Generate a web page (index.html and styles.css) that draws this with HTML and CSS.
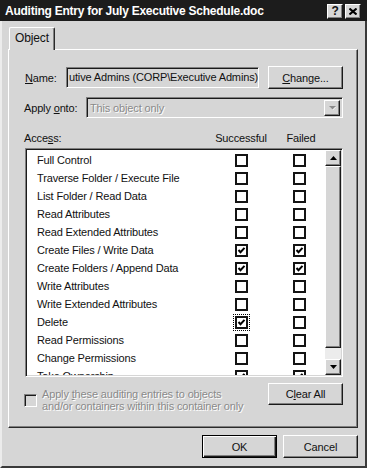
FILE: index.html
```html
<!DOCTYPE html>
<html>
<head>
    <title>Auditing Entry for July Executive Schedule.doc</title>
    <link rel="stylesheet" href="styles.css">
</head>
<body>
<div class="window">
    <!-- Title bar -->
    <div class="titlebar">
        <span class="title">Auditing Entry for July Executive Schedule.doc</span>
        <div class="caption-buttons">
            <span class="caption-btn help">?</span>
            <span class="caption-btn close">
                <svg width="8" height="7" viewBox="0 0 8 7"><path d="M0.5 0.5 L7.5 6.5 M7.5 0.5 L0.5 6.5" stroke="#000" stroke-width="2"/></svg>
            </span>
        </div>
    </div>

    <div class="frame">
        <div class="tabs"><div class="tab">Object</div></div>

        <div class="panel">
            <div class="name-row">
                <span class="field-label name-label"><u>N</u>ame:</span>
                <div class="textbox">utive Admins (CORP\Executive Admins)</div>
                <button class="btn change-btn"><u>C</u>hange...</button>
            </div>

            <div class="apply-row">
                <span class="field-label apply-label">Apply <u>o</u>nto:</span>
                <div class="combo">
                    <span class="combo-text">This object only</span>
                    <span class="combo-arrow">
                        <svg width="7" height="4" viewBox="0 0 7 4"><path d="M1 1 L7 1 L4 4 Z" fill="#fff"/><path d="M0 0 L7 0 L3.5 3.5 Z" fill="#8a8a8a"/></svg>
                    </span>
                </div>
            </div>

            <div class="access-header">
                <span>Acce<u>s</u>s:</span>
                <span class="col-head">Successful</span>
                <span class="col-head">Failed</span>
            </div>

            <div class="list">
                <div class="rows" id="rows"></div>
                <div class="scrollbar">
                    <div class="sb-btn">
                        <svg width="7" height="4" viewBox="0 0 7 4"><path d="M3.5 0 L7 4 L0 4 Z" fill="#000"/></svg>
                    </div>
                    <div class="sb-thumb"></div>
                    <div class="sb-track"></div>
                    <div class="sb-btn">
                        <svg width="7" height="4" viewBox="0 0 7 4"><path d="M0 0 L7 0 L3.5 4 Z" fill="#000"/></svg>
                    </div>
                </div>
            </div>

            <div class="bottom-row">
                <div class="apply-check">
                    <span class="checkbox disabled-box"></span>
                    <span class="disabled-text">Apply <u>t</u>hese auditing entries to objects<br>and/or containers within this container only</span>
                </div>
                <button class="btn clear-btn">C<u>l</u>ear All</button>
            </div>
        </div>

        <div class="footer">
            <button class="btn default-btn">OK</button>
            <button class="btn">Cancel</button>
        </div>
    </div>
</div>

<script>
    const rowsDiv = document.getElementById('rows');
    const checkSvg = '<svg width="9" height="9" viewBox="0 0 9 9"><path d="M1.5 4 L3.5 6.2 L7.5 1.8" stroke="#000" stroke-width="2" fill="none"/></svg>';

    // [name, successful, failed, focused]
    const entries = [
        ['Full Control', false, false],
        ['Traverse Folder / Execute File', false, false],
        ['List Folder / Read Data', false, false],
        ['Read Attributes', false, false],
        ['Read Extended Attributes', false, false],
        ['Create Files / Write Data', true, true],
        ['Create Folders / Append Data', true, true],
        ['Write Attributes', false, false],
        ['Write Extended Attributes', false, false],
        ['Delete', true, false, true],
        ['Read Permissions', false, false],
        ['Change Permissions', false, false],
        ['Take Ownership', true, true]
    ];

    rowsDiv.innerHTML = entries.map(e => `
        <div class="row">
            <span>${e[0]}</span>
            <span class="checkbox ${e[3] ? 'focused' : ''}">${e[1] ? checkSvg : ''}</span>
            <span class="checkbox">${e[2] ? checkSvg : ''}</span>
        </div>`).join('');
</script>
</body>
</html>
```

FILE: styles.css
```css
* {
    box-sizing: border-box;
}

body {
    margin: 0;
    font-family: 'Liberation Sans', Arial, sans-serif;
    font-size: 11px;
    letter-spacing: -0.15px;
    color: #111;
    background: #d6d6d6;
}

.window {
    width: 367px;
    height: 468px;
    background: #d6d6d6;
    display: flex;
    flex-direction: column;
}

/* Title bar */
.titlebar {
    height: 21px;
    background: #1c1c1c;
    display: flex;
    align-items: center;
    justify-content: space-between;
    padding: 1px 6px 0 5px;
}

.title {
    color: #fff;
    font-weight: bold;
    font-size: 12px;
    letter-spacing: -0.25px;
}

.caption-buttons {
    display: flex;
    gap: 2px;
}

.caption-btn {
    width: 16px;
    height: 15px;
    background: #d6d6d6;
    border: 1px solid;
    border-color: #fff #1a1a1a #1a1a1a #fff;
    box-shadow: inset -1px -1px #808080;
    display: flex;
    align-items: center;
    justify-content: center;
    font-weight: bold;
    font-size: 12px;
    line-height: 12px;
}

/* Window body */
.frame {
    flex: 1;
    border-left: 2px solid #ececec;
    border-right: 2px solid #3a3a3a;
    border-bottom: 2px solid #3a3a3a;
    padding: 6px 7px 0 6px;
    display: flex;
    flex-direction: column;
}

.tabs {
    display: flex;
    padding-left: 1px;
}

.tab {
    position: relative;
    z-index: 1;
    width: 46px;
    height: 23px;
    margin-bottom: -1px;
    background: #d6d6d6;
    border: 1px solid;
    border-color: #fff #2a2a2a transparent #fff;
    border-bottom: none;
    box-shadow: inset -1px 0 #808080;
    border-radius: 2px 2px 0 0;
    text-align: center;
    line-height: 21px;
    font-size: 12px;
}

.panel {
    height: 379px;
    border: 1px solid;
    border-color: #fff #2a2a2a #2a2a2a #fff;
    box-shadow: inset -1px -1px #808080;
    padding: 16px 14px 0 15px;
}

/* Fields */
.name-row {
    display: flex;
    align-items: center;
    height: 23px;
}

.field-label {
    flex: none;
}

.name-label {
    width: 42px;
    padding-left: 1px;
}

.textbox {
    width: 193px;
    height: 21px;
    border: 1px solid;
    border-color: #808080 #fff #fff #808080;
    box-shadow: inset 1px 1px #1a1a1a;
    padding: 3px 0 0 2px;
    white-space: nowrap;
    overflow: hidden;
    margin-right: 9px;
}

.apply-row {
    display: flex;
    align-items: center;
    height: 21px;
    margin-top: 8px;
}

.apply-label {
    width: 62px;
}

.combo {
    flex: 1;
    height: 21px;
    border: 1px solid;
    border-color: #808080 #fff #fff #808080;
    box-shadow: inset 1px 1px #1a1a1a;
    display: flex;
    align-items: center;
    justify-content: space-between;
    padding: 1px 2px 1px 3px;
}

.combo-text {
    color: #8a8a8a;
    text-shadow: 1px 1px #fff;
}

.combo-arrow {
    width: 16px;
    height: 16px;
    border: 1px solid;
    border-color: #fff #1a1a1a #1a1a1a #fff;
    box-shadow: inset -1px -1px #808080;
    display: flex;
    align-items: center;
    justify-content: center;
}

/* Buttons */
.btn {
    width: 75px;
    height: 23px;
    font-family: inherit;
    font-size: 11px;
    letter-spacing: -0.15px;
    color: #111;
    background: #d6d6d6;
    border: 1px solid;
    border-color: #fff #1a1a1a #1a1a1a #fff;
    box-shadow: inset -1px -1px #808080;
    padding: 0;
}

.default-btn {
    border: 1px solid #000;
    box-shadow: inset 1px 1px #fff, inset -1px -1px #1a1a1a, inset -2px -2px #808080;
}

/* Access list */
.access-header {
    display: grid;
    grid-template-columns: 187px 60px 60px;
    margin-top: 13px;
    height: 14px;
    line-height: 14px;
}

.col-head {
    text-align: center;
}

.list {
    display: flex;
    width: 318px;
    height: 229px;
    margin: 3px 0 0 1px;
    background: #fff;
    border: 1px solid;
    border-color: #808080 #fff #fff #808080;
    box-shadow: inset 1px 1px #1a1a1a, inset -1px -1px #d6d6d6;
    padding: 1px;
}

.rows {
    flex: 1;
    overflow: hidden;
    padding-top: 1px;
}

.row {
    display: grid;
    grid-template-columns: 198px 58px 13px;
    align-items: center;
    height: 18px;
    padding-left: 10px;
}

.checkbox {
    width: 13px;
    height: 13px;
    border: 2px solid #141414;
    background: #fff;
    display: flex;
    align-items: center;
    justify-content: center;
}

.checkbox.focused {
    outline: 1px dotted #000;
    outline-offset: 1px;
}

.scrollbar {
    width: 16px;
    display: flex;
    flex-direction: column;
}

.sb-btn {
    height: 16px;
    background: #d6d6d6;
    border: 1px solid;
    border-color: #fff #1a1a1a #1a1a1a #fff;
    box-shadow: inset -1px -1px #808080;
    display: flex;
    align-items: center;
    justify-content: center;
}

.sb-thumb {
    height: 182px;
    background: #d6d6d6;
    border: 1px solid;
    border-color: #fff #1a1a1a #1a1a1a #fff;
    box-shadow: inset -1px -1px #808080;
}

.sb-track {
    flex: 1;
    background: #ececec;
}

/* Bottom row */
.bottom-row {
    display: flex;
    justify-content: space-between;
    margin-top: 6px;
}

.apply-check {
    display: flex;
    align-items: center;
    margin-top: 5px;
}

.disabled-box {
    background: #d6d6d6;
    border: 1px solid;
    border-color: #808080 #fff #fff #808080;
    box-shadow: inset 1px 1px #1a1a1a;
}

.disabled-text {
    margin-left: 5px;
    line-height: 12px;
    white-space: nowrap;
    color: #8a8a8a;
    text-shadow: 1px 1px #fff;
}

.clear-btn {
    height: 22px;
}

/* Footer */
.footer {
    display: flex;
    justify-content: flex-end;
    gap: 6px;
    padding: 7px 0 0;
}
```
